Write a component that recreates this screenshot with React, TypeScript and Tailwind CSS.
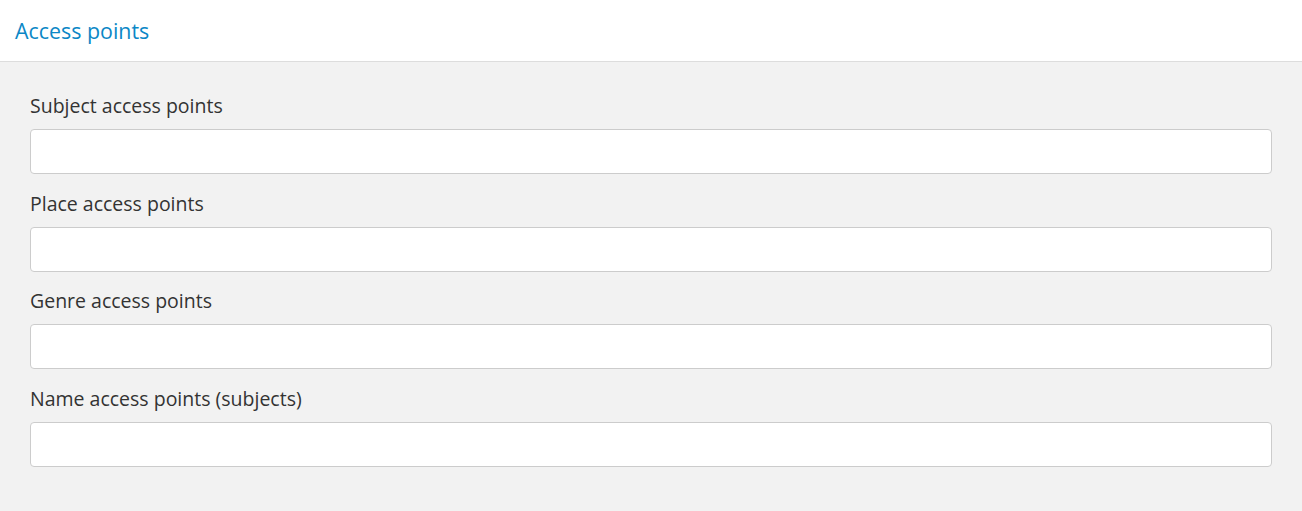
import React from "react";

const fields = [
  "Subject access points",
  "Place access points",
  "Genre access points",
  "Name access points (subjects)",
];

export default function App() {
  return (
    <div className="w-[1302px] h-[511px] overflow-hidden bg-[#f2f2f2]" style={{ fontFamily: '"Open Sans", sans-serif' }}>
      <div className="h-[62px] bg-white border-b border-[#dddddd] flex items-center px-[15px]">
        <span className="text-[21.4px] text-[#0b87c6] leading-none">Access points</span>
      </div>
      <div className="pl-[30px] pr-[30px] pt-[32px]">
        {fields.map((f) => (
          <div key={f} className="mb-[17.67px]">
            <div className="text-[19.5px] leading-[23px] text-[#333333] mb-[12px]">{f}</div>
            <input className="block w-full h-[45px] bg-white border border-[#cccccc] rounded-[4px]" />
          </div>
        ))}
      </div>
    </div>
  );
}
